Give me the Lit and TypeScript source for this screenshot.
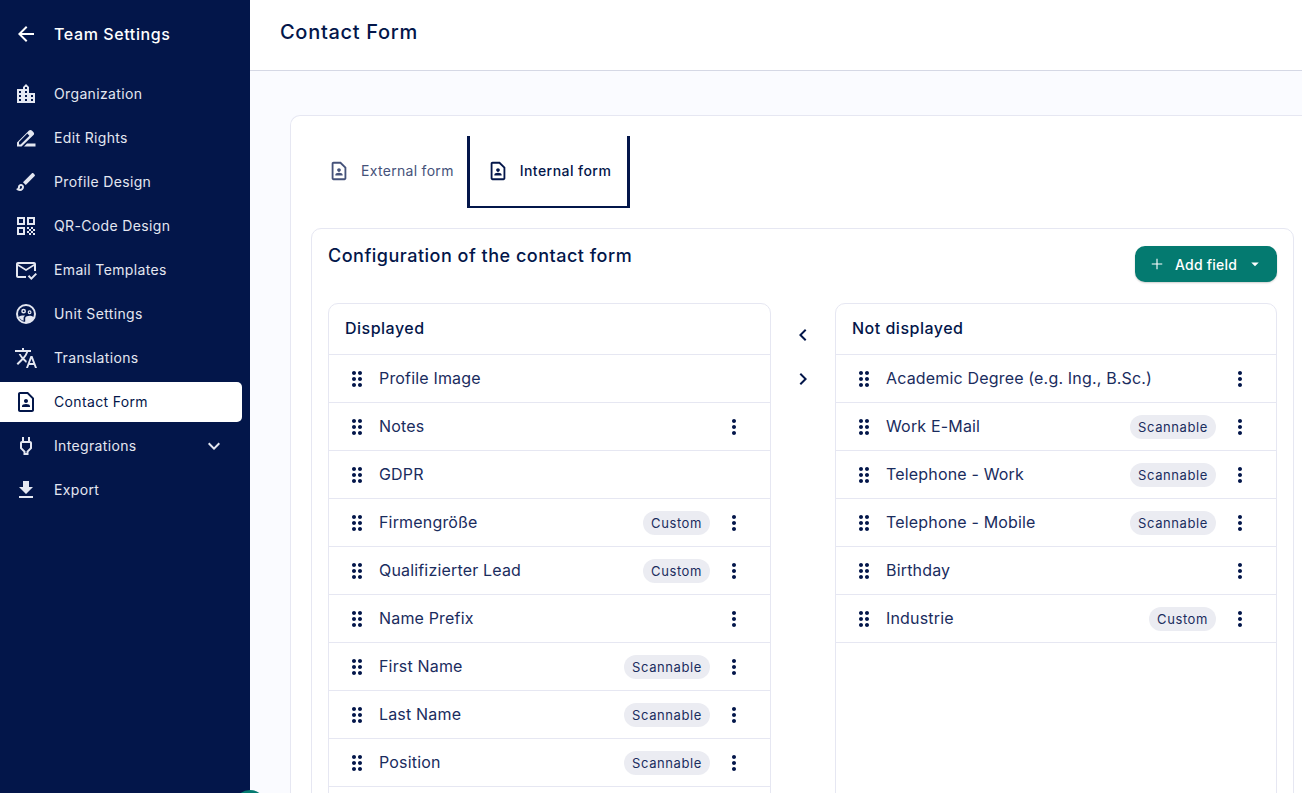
import { LitElement, html, css, svg } from "lit";
import { customElement } from "lit/decorators.js";

const paths: Record<string, string> = {
  back: "M20 11H7.83l5.59-5.59L12 4l-8 8 8 8 1.41-1.41L7.83 13H20v-2z",
  org: "M15 11V5l-3-3-3 3v2H3v14h18V11h-6zm-8 8H5v-2h2v2zm0-4H5v-2h2v2zm0-4H5V9h2v2zm6 8h-2v-2h2v2zm0-4h-2v-2h2v2zm0-4h-2V9h2v2zm0-4h-2V5h2v2zm6 12h-2v-2h2v2zm0-4h-2v-2h2v2z",
  rights: "M3 20.5v-4L15 4.5c.8-.8 2-.8 2.8 0l1.7 1.7c.8.8.8 2 0 2.8L7.5 20.5H3zM5 18.5h1.6l8.8-8.8-2.1-2.1L5 15.9v2.6zM13 17.5h8.5v3H10z",
  brush: "M7 16c.55 0 1 .45 1 1 0 1.1-.9 2-2 2-.17 0-.33-.02-.5-.05.31-.55.5-1.21.5-1.95 0-.55.45-1 1-1M18.67 3c-.26 0-.51.1-.71.29L9 12.25 11.75 15l8.96-8.96c.39-.39.39-1.02 0-1.41l-1.34-1.34c-.2-.2-.45-.29-.7-.29zM7 14c-1.66 0-3 1.34-3 3 0 1.31-1.16 2-2 2 .92 1.22 2.49 2 4 2 2.21 0 4-1.79 4-4 0-1.66-1.34-3-3-3z",
  qr: "M3 11h8V3H3v8zm2-6h4v4H5V5zM3 21h8v-8H3v8zm2-6h4v4H5v-4zM13 3v8h8V3h-8zm6 6h-4V5h4v4zM19 19h2v2h-2zM13 13h2v2h-2zM15 15h2v2h-2zM13 17h2v2h-2zM15 19h2v2h-2zM17 17h2v2h-2zM17 13h2v2h-2zM19 15h2v2h-2z",
  mail: "M12 20H4c-1.1 0-2-.9-2-2V6c0-1.1.9-2 2-2h16c1.1 0 2 .9 2 2v7h-2V8l-8 5-8-5v10h8v2zM20 6H4l8 5 8-5zM17.34 22l-3.54-3.54 1.41-1.41 2.12 2.12 4.24-4.24L23 16.34 17.34 22z",
  unit: "M12 2a10 10 0 1 1 0 20a10 10 0 1 1 0-20zM12 4a8 8 0 1 0 0 16a8 8 0 1 0 0-16zM9.6 6.8a2.4 2.4 0 1 1 0 4.8a2.4 2.4 0 1 1 0-4.8zM9.6 8.3a.9.9 0 1 0 0 1.8a.9.9 0 1 0 0-1.8zM15.6 8.3a1.95 1.95 0 1 1 0 3.9a1.95 1.95 0 1 1 0-3.9zM15.6 9.5a.75.75 0 1 0 0 1.5a.75.75 0 1 0 0-1.5zM11.2 21v-5.1c0-1.4 2.9-2.1 4.4-2.1 1.1 0 3 .4 4 1.2L21 16l-5 5zM4.6 15c1-.9 3.4-1.4 5-1.4.5 0 1 .05 1.5.15-1 .6-1.5 1.4-1.5 2.2v2.9c-2.2-.7-4-2.4-5-3.85z",
  translate: "M12.87 15.07l-2.54-2.51.03-.03c1.74-1.94 2.98-4.17 3.71-6.53H17V4h-7V2H8v2H1v1.99h11.17C11.5 7.92 10.44 9.75 9 11.35 8.07 10.32 7.3 9.19 6.69 8h-2c.73 1.63 1.73 3.17 2.98 4.56l-5.09 5.02L4 19l5-5 3.11 3.11.76-2.04zM18.5 10h-2L12 22h2l1.12-3h4.75L21 22h2l-4.5-12zm-2.62 7l1.62-4.33L19.12 17h-3.24z",
  contact: "M14 2H6c-1.1 0-2 .9-2 2v16c0 1.1.89 2 1.99 2H18c1.1 0 2-.9 2-2V8l-6-6zM6 20V4h7.17L18 8.83V20H6zm6-7c1.1 0 2-.9 2-2s-.9-2-2-2-2 .9-2 2 .9 2 2 2zm4 3.43c0-.81-.48-1.53-1.22-1.85-.85-.37-1.79-.58-2.78-.58s-1.93.21-2.78.58C8.48 14.9 8 15.62 8 16.43V17h8v-.57z",
  power: "M16 7V3h-2v4h-4V3H8v4C6.9 7 6 7.9 6 9v5.49L9.5 18v3h5v-3l3.5-3.51V9c0-1.1-.9-2-2-2zm0 6.66l-3.5 3.51V19h-1v-1.83L8 13.65V9h8v4.66z",
  download: "M19 9h-4V3H9v6H5l7 7 7-7zM5 18v2h14v-2H5z",
  down: "M16.59 8.59L12 13.17 7.41 8.59 6 10l6 6 6-6z",
  left: "M15.41 7.41L14 6l-6 6 6 6 1.41-1.41L10.83 12z",
  right: "M10 6L8.59 7.41 13.17 12l-4.58 4.59L10 18l6-6z",
  drag: "M11 18c0 1.1-.9 2-2 2s-2-.9-2-2 .9-2 2-2 2 .9 2 2zm-2-8c-1.1 0-2 .9-2 2s.9 2 2 2 2-.9 2-2-.9-2-2-2zm0-6c-1.1 0-2 .9-2 2s.9 2 2 2 2-.9 2-2-.9-2-2-2zm6 4c1.1 0 2-.9 2-2s-.9-2-2-2-2 .9-2 2 .9 2 2 2zm0 2c-1.1 0-2 .9-2 2s.9 2 2 2 2-.9 2-2-.9-2-2-2zm0 6c-1.1 0-2 .9-2 2s.9 2 2 2 2-.9 2-2-.9-2-2-2z",
  more: "M12 8c1.1 0 2-.9 2-2s-.9-2-2-2-2 .9-2 2 .9 2 2 2zm0 2c-1.1 0-2 .9-2 2s.9 2 2 2 2-.9 2-2-.9-2-2-2zm0 6c-1.1 0-2 .9-2 2s.9 2 2 2 2-.9 2-2-.9-2-2-2z",
  add: "M19 12.75h-6.25V19h-1.5v-6.25H5v-1.5h6.25V5h1.5v6.25H19v1.5z",
  caret: "M7 10l5 5 5-5z",
};

const icon = (name: string) =>
  html`<svg class="icon" viewBox="0 0 24 24" fill="currentColor">${svg`<path d=${paths[name]}></path>`}</svg>`;

type Row = { label: string; tag?: string; menu?: boolean };

const navItems = [
  { icon: "org", label: "Organization" },
  { icon: "rights", label: "Edit Rights" },
  { icon: "brush", label: "Profile Design" },
  { icon: "qr", label: "QR-Code Design" },
  { icon: "mail", label: "Email Templates" },
  { icon: "unit", label: "Unit Settings" },
  { icon: "translate", label: "Translations" },
  { icon: "contact", label: "Contact Form", active: true },
  { icon: "power", label: "Integrations", expand: true },
  { icon: "download", label: "Export" },
];

const displayed: Row[] = [
  { label: "Profile Image" },
  { label: "Notes", menu: true },
  { label: "GDPR" },
  { label: "Firmengröße", tag: "Custom", menu: true },
  { label: "Qualifizierter Lead", tag: "Custom", menu: true },
  { label: "Name Prefix", menu: true },
  { label: "First Name", tag: "Scannable", menu: true },
  { label: "Last Name", tag: "Scannable", menu: true },
  { label: "Position", tag: "Scannable", menu: true },
];

const hidden: Row[] = [
  { label: "Academic Degree (e.g. Ing., B.Sc.)", menu: true },
  { label: "Work E-Mail", tag: "Scannable", menu: true },
  { label: "Telephone - Work", tag: "Scannable", menu: true },
  { label: "Telephone - Mobile", tag: "Scannable", menu: true },
  { label: "Birthday", menu: true },
  { label: "Industrie", tag: "Custom", menu: true },
];

@customElement("app-root")
export class AppRoot extends LitElement {
  static styles = css`
    :host {
      display: flex;
      position: relative;
      height: 793px;
      overflow: hidden;
      font-family: "Inter", "Liberation Sans", sans-serif;
      color: #03164a;
      background: #fafbff;
    }
    .icon {
      width: 24px;
      height: 24px;
      flex: none;
      display: block;
    }
    .sidebar {
      width: 250px;
      flex: none;
      background: #03164a;
      color: #fff;
      padding-right: 8px;
      box-sizing: border-box;
    }
    .back {
      display: flex;
      align-items: center;
      gap: 16px;
      height: 24px;
      padding: 22px 0 16px 14px;
      font-size: 16px;
      font-weight: 500;
      letter-spacing: 0.6px;
    }
    .nav {
      margin-top: 12px;
    }
    .nav-item {
      display: flex;
      align-items: center;
      gap: 16px;
      height: 40px;
      margin-bottom: 4px;
      padding: 0 16px 0 14px;
      font-size: 14px;
      letter-spacing: 0.35px;
      color: #e4e7f1;
      border-radius: 0 5px 5px 0;
    }
    .nav-item .label {
      flex: 1;
      padding-bottom: 1px;
    }
    .nav-item.active {
      background: #fff;
      color: #03164a;
    }
    .main {
      flex: 1;
      min-width: 0;
    }
    .topbar {
      height: 64px;
      background: #fff;
      border-bottom: 1px solid #d5d8e5;
      padding: 0 30px 6px;
      display: flex;
      align-items: center;
      font-size: 20px;
      font-weight: 500;
      letter-spacing: 0.7px;
    }
    .page {
      padding: 44px 0 0 40px;
    }
    .card {
      background: #fff;
      border: 1px solid #e6e7f2;
      border-right: none;
      border-radius: 10px 0 0 0;
      padding: 20px 8px 0 20px;
    }
    .tabs {
      display: flex;
      height: 72px;
    }
    .tab {
      display: flex;
      align-items: center;
      gap: 11px;
      padding: 0 13px 3px 17px;
      font-size: 14px;
      letter-spacing: 0.3px;
      color: #45527a;
      box-sizing: border-box;
    }
    .tab .icon {
      width: 22px;
      height: 22px;
    }
    .tab.active {
      color: #03164a;
      font-weight: 500;
      letter-spacing: 0.45px;
      border: solid #03164a;
      border-width: 0 3px 2px;
      padding: 0 16px 1px 17px;
    }
    .panel {
      margin-top: 20px;
      border: 1px solid #e6e7f2;
      border-radius: 10px 10px 0 0;
      padding: 16px 16px 0;
    }
    .panel-head {
      display: flex;
      justify-content: space-between;
      align-items: flex-start;
      margin-bottom: 21px;
    }
    .panel-title {
      font-size: 18px;
      font-weight: 500;
      line-height: 22px;
      letter-spacing: 0.5px;
    }
    .add {
      display: flex;
      align-items: center;
      height: 36px;
      margin-top: 1px;
      padding: 0 13px;
      gap: 9px;
      background: #047a70;
      color: #fff;
      border-radius: 10px;
      font-size: 14px;
      font-weight: 500;
      letter-spacing: 0.2px;
      box-shadow: 0 1px 2px rgba(0, 0, 0, 0.2);
    }
    .add .icon {
      width: 18px;
      height: 18px;
    }
    .lists {
      display: grid;
      grid-template-columns: 443px 1fr;
      column-gap: 64px;
      position: relative;
    }
    .list {
      border: 1px solid #e6e7f2;
      border-radius: 10px 10px 0 0;
      height: 600px;
      box-sizing: border-box;
    }
    .list-head {
      height: 51px;
      display: flex;
      align-items: center;
      padding: 0 0 2px 16px;
      box-sizing: border-box;
      font-size: 16px;
      font-weight: 500;
      letter-spacing: 0.5px;
      border-bottom: 1px solid #e6e7f2;
    }
    .row {
      height: 47px;
      display: flex;
      align-items: center;
      padding: 0 24px 0 16px;
      font-size: 16px;
      letter-spacing: 0.17px;
      border-bottom: 1px solid #e6e7f2;
      color: #1a2c5e;
    }
    .row .label {
      flex: 1;
      margin-left: 10px;
      padding-bottom: 2px;
      white-space: nowrap;
    }
    .row .icon {
      color: #03164a;
    }
    .row .drag {
      width: 24px;
      height: 24px;
    }
    .tag {
      background: #ebecf2;
      border-radius: 12px;
      height: 24px;
      line-height: 24px;
      padding: 0 8px;
      font-size: 13px;
      letter-spacing: 0.6px;
      margin-right: 12px;
      color: #1a2c5e;
    }
    .movers {
      display: flex;
      flex-direction: column;
      align-items: center;
      gap: 20px;
      position: absolute;
      left: 443px;
      width: 64px;
      top: 20px;
    }
    .bubble {
      position: absolute;
      left: 234px;
      top: 790px;
      width: 32px;
      height: 32px;
      border-radius: 50%;
      background: #047a70;
    }
  `;

  private renderRow(r: Row) {
    return html`<div class="row">
      <span class="drag">${icon("drag")}</span>
      <span class="label">${r.label}</span>
      ${r.tag ? html`<span class="tag">${r.tag}</span>` : ""}
      ${r.menu ? icon("more") : ""}
    </div>`;
  }

  render() {
    return html`
      <aside class="sidebar">
        <div class="back">${icon("back")}<span>Team Settings</span></div>
        <nav class="nav">
          ${navItems.map(
            (n) => html`<div class="nav-item ${n.active ? "active" : ""}">
              ${icon(n.icon)}
              <span class="label">${n.label}</span>
              ${n.expand ? icon("down") : ""}
            </div>`
          )}
        </nav>
      </aside>
      <main class="main">
        <header class="topbar">Contact Form</header>
        <div class="page">
          <section class="card">
            <div class="tabs">
              <div class="tab">${icon("contact")}<span>External form</span></div>
              <div class="tab active">${icon("contact")}<span>Internal form</span></div>
            </div>
            <div class="panel">
              <div class="panel-head">
                <div class="panel-title">Configuration of the contact form</div>
                <div class="add">${icon("add")}<span>Add field</span>${icon("caret")}</div>
              </div>
              <div class="lists">
                <div class="list">
                  <div class="list-head">Displayed</div>
                  ${displayed.map((r) => this.renderRow(r))}
                </div>
                <div class="movers">${icon("left")}${icon("right")}</div>
                <div class="list">
                  <div class="list-head">Not displayed</div>
                  ${hidden.map((r) => this.renderRow(r))}
                </div>
              </div>
            </div>
          </section>
        </div>
      </main>
      <div class="bubble"></div>
    `;
  }
}
